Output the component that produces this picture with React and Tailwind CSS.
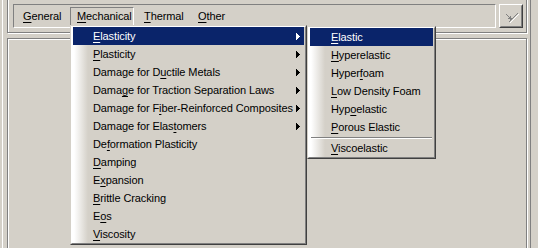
import React from "react";

function Label({ text, u }) {
  if (u == null || u < 0) return <>{text}</>;
  return (
    <>
      {text.slice(0, u)}
      <span className="underline decoration-1 underline-offset-[2px]">{text[u]}</span>
      {text.slice(u + 1)}
    </>
  );
}

function Arrow({ white }) {
  return (
    <svg width="4" height="7" viewBox="0 0 4 7" shapeRendering="crispEdges">
      <polygon points="0,0 4,3.5 0,7" fill={white ? "#ffffff" : "#000000"} />
    </svg>
  );
}

const mainItems = [
  ["Elasticity", 0, true],
  ["Plasticity", 0, true],
  ["Damage for Ductile Metals", 12, true],
  ["Damage for Traction Separation Laws", 4, true],
  ["Damage for Fiber-Reinforced Composites", 12, true],
  ["Damage for Elastomers", 15, true],
  ["Deformation Plasticity", 2, false],
  ["Damping", 0, false],
  ["Expansion", 1, false],
  ["Brittle Cracking", 0, false],
  ["Eos", 1, false],
  ["Viscosity", 0, false],
];

const subItems = [
  ["Elastic", 0],
  ["Hyperelastic", 0],
  ["Hyperfoam", 5],
  ["Low Density Foam", 0],
  ["Hypoelastic", 3],
  ["Porous Elastic", 0],
];

function Tab({ text, u, pressed, w, ml }) {
  return (
    <div
      className={`${w} ${ml} mt-[2px] h-[19px] border pl-[6px] pt-[2px] leading-[13px] whitespace-nowrap ${
        pressed
          ? "border-t-[#808080] border-l-[#808080] border-r-white border-b-white"
          : "border-transparent"
      }`}
    >
      <Label text={text} u={u} />
    </div>
  );
}

export default function App() {
  return (
    <div className="relative w-[538px] h-[248px] overflow-hidden bg-[#d4d0c8] pl-[2px] font-['Liberation_Sans',Arial,sans-serif] text-[11px] tracking-[-0.1px] text-black">
      <div className="w-[529px] h-full border-l border-white border-r border-r-[#808080] pl-[4px] flex flex-col">
        <div className="-mt-[2px] w-[520px] h-[35px] shrink-0 border border-[#808080] shadow-[inset_1px_1px_0_#fff,1px_1px_0_#fff]">
          <div className="pt-[5px] pl-[5px] flex">
            <div className="w-[483px] h-[24px] border border-t-[#808080] border-l-[#808080] border-r-white border-b-white flex">
              <Tab text="General" u={0} w="w-[50px]" ml="ml-[2px]" />
              <Tab text="Mechanical" u={0} w="w-[64px]" ml="ml-[4px]" pressed />
              <Tab text="Thermal" u={0} w="w-[50px]" ml="ml-[3px]" />
              <Tab text="Other" u={0} w="w-[44px]" ml="ml-[4px]" />
            </div>
            <div className="ml-[3px] w-[24px] h-[24px] border border-t-white border-l-white border-r-[#404040] border-b-[#404040]">
              <div className="w-full h-full border border-t-[#d4d0c8] border-l-[#d4d0c8] border-r-[#808080] border-b-[#808080] flex items-center justify-center">
                <svg width="20" height="20" viewBox="0 0 20 20" shapeRendering="crispEdges">
                  <line x1="8" y1="16" x2="17" y2="7" stroke="#ffffff" strokeWidth="1" transform="translate(1,1)" />
                  <line x1="8" y1="16" x2="17" y2="7" stroke="#808080" strokeWidth="1.2" />
                  <line x1="5" y1="8" x2="10" y2="13" stroke="#808080" strokeWidth="1.2" />
                  <polygon points="11,14 6,13 10,9" fill="#808080" />
                </svg>
              </div>
            </div>
          </div>
        </div>
        <div className="mt-[5px] w-[520px] h-[230px] shrink-0 border border-[#808080] shadow-[inset_1px_1px_0_#fff,1px_1px_0_#fff]" />
      </div>

      <div className="absolute left-[70px] top-[25px] w-[237px] border border-t-[#d4d0c8] border-l-[#d4d0c8] border-r-[#404040] border-b-[#404040]">
        <div className="border border-t-white border-l-white border-r-[#808080] border-b-[#808080] px-[1px] bg-[linear-gradient(to_right,#ffffff_0px,#ffffff_2px,#d4d0c8_16px)]">
          {mainItems.map(([t, u, sub], i) => {
            const hi = i === 0;
            return (
              <div
                key={t}
                className={`h-[18px] leading-[18px] pl-[20px] pr-[4px] flex items-center justify-between whitespace-nowrap ${
                  hi ? "bg-[#0a246a] text-white" : ""
                }`}
              >
                <span>
                  <Label text={t} u={u} />
                </span>
                {sub && <Arrow white={hi} />}
              </div>
            );
          })}
        </div>
      </div>

      <div className="absolute left-[307px] top-[26px] w-[129px] border border-t-[#d4d0c8] border-l-[#d4d0c8] border-r-[#404040] border-b-[#404040]">
        <div className="border border-t-white border-l-white border-r-[#808080] border-b-[#808080] px-[1px] bg-[linear-gradient(to_right,#ffffff_0px,#ffffff_2px,#d4d0c8_16px)]">
          {subItems.map(([t, u], i) => {
            const hi = i === 0;
            return (
              <div
                key={t}
                className={`h-[18px] leading-[18px] pl-[21px] whitespace-nowrap ${
                  hi ? "bg-[#0a246a] text-white" : ""
                }`}
              >
                <Label text={t} u={u} />
              </div>
            );
          })}
          <div className="h-[3px] pt-[1px] px-[1px]">
            <div className="h-px bg-[#808080]" />
            <div className="h-px bg-white" />
          </div>
          <div className="h-[18px] leading-[18px] pl-[21px] whitespace-nowrap">
            <Label text="Viscoelastic" u={0} />
          </div>
        </div>
      </div>
    </div>
  );
}
